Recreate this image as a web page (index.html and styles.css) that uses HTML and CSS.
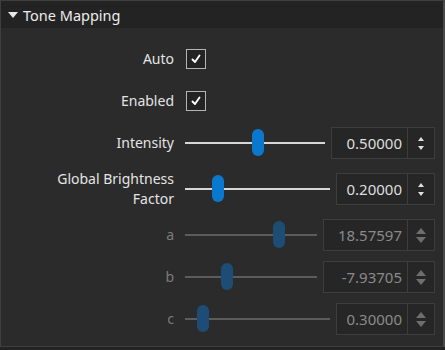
FILE: index.html
```html
<!DOCTYPE html>
<html lang="en">

<head>
  <meta charset="UTF-8">
  <title>Tone Mapping</title>
  <link rel="stylesheet" href="styles.css">
</head>

<body>
  <div class="panel">
    <!-- 标题栏 -->
    <div class="panel-head">
      <span class="caret"></span>
      <span class="panel-title">Tone Mapping</span>
    </div>

    <div class="panel-body">
      <div class="row">
        <div class="label">Auto</div>
        <div class="ctrl"><span class="check"><svg width="14" height="14" viewBox="0 0 14 14"><path d="M3.5 7.5 L6 10 L10.5 3.5" fill="none" stroke="#fff" stroke-width="1.9" stroke-linecap="round" stroke-linejoin="round"/></svg></span></div>
      </div>
      <div class="row">
        <div class="label">Enabled</div>
        <div class="ctrl"><span class="check"><svg width="14" height="14" viewBox="0 0 14 14"><path d="M3.5 7.5 L6 10 L10.5 3.5" fill="none" stroke="#fff" stroke-width="1.9" stroke-linecap="round" stroke-linejoin="round"/></svg></span></div>
      </div>
      <div class="row">
        <div class="label">Intensity</div>
        <div class="ctrl">
          <div class="slider"><div class="thumb" style="left:48.2%"></div></div>
          <div class="spin">
            <span class="spin-val">0.50000</span>
            <span class="spin-btns"><i class="up"></i><i class="down"></i></span>
          </div>
        </div>
      </div>
      <div class="row row-tall">
        <div class="label">Global Brightness<br>Factor</div>
        <div class="ctrl">
          <div class="slider"><div class="thumb" style="left:18.6%"></div></div>
          <div class="spin spin-narrow">
            <span class="spin-val">0.20000</span>
            <span class="spin-btns"><i class="up"></i><i class="down"></i></span>
          </div>
        </div>
      </div>
      <!-- 不可用的参数 -->
      <div class="row off">
        <div class="label">a</div>
        <div class="ctrl">
          <div class="slider"><div class="thumb" style="left:66.7%"></div></div>
          <div class="spin spin-wide">
            <span class="spin-val">18.57597</span>
            <span class="spin-btns"><i class="up"></i><i class="down"></i></span>
          </div>
        </div>
      </div>
      <div class="row off">
        <div class="label">b</div>
        <div class="ctrl">
          <div class="slider"><div class="thumb" style="left:27.3%"></div></div>
          <div class="spin spin-wide">
            <span class="spin-val">-7.93705</span>
            <span class="spin-btns"><i class="up"></i><i class="down"></i></span>
          </div>
        </div>
      </div>
      <div class="row off">
        <div class="label">c</div>
        <div class="ctrl">
          <div class="slider"><div class="thumb" style="left:8.3%"></div></div>
          <div class="spin spin-narrow">
            <span class="spin-val">0.30000</span>
            <span class="spin-btns"><i class="up"></i><i class="down"></i></span>
          </div>
        </div>
      </div>
    </div>
  </div>
</body>

</html>
```

FILE: styles.css
```css
* {
  margin: 0;
  padding: 0;
  box-sizing: border-box;
}

body {
  background: #232323;
  font-family: "Noto Sans", "Open Sans", sans-serif;
  color: #e2e2e2;
}

/* 面板 */
.panel {
  width: 445px;
  height: 347px;
  border: 1px solid #3e3e3e;
  border-right: 2px solid #4a4a4a;
  background: #2b2b2c;
}

.panel-head {
  height: 27px;
  background: #232323;
  display: flex;
  align-items: center;
  padding-left: 7px;
}
.caret {
  width: 0;
  height: 0;
  border-left: 5px solid transparent;
  border-right: 5px solid transparent;
  border-top: 6px solid #e8e8e8;
  margin-right: 5px;
  margin-top: 1px;
}
.panel-title {
  font-size: 14.5px;
  color: #ececec;
  line-height: 20px;
}

.panel-body {
  padding-top: 10px;
}

/* 每一行 */
.row {
  height: 42px;
  display: flex;
  align-items: center;
}
.row-tall {
  height: 46px;
  margin: 2px 0;
}
.label {
  width: 173px;
  text-align: right;
  font-size: 14px;
  line-height: 20px;
  color: #e4e4e4;
}
.ctrl {
  margin-left: 11px;
  width: 250px;
  display: flex;
  align-items: center;
  gap: 6px;
}

/* 复选框 */
.check {
  width: 20px;
  height: 20px;
  margin-left: 1px;
  border: 1px solid #b4b4b4;
  background: #232323;
  display: flex;
  align-items: center;
  justify-content: center;
}

/* 滑块 */
.slider {
  flex: 1;
  height: 2px;
  background: #d6d6d6;
  position: relative;
}
.thumb {
  position: absolute;
  top: -13px;
  width: 12px;
  height: 27px;
  border-radius: 6px;
  background: #0b78d0;
}

/* 数值框 */
.spin {
  width: 104px;
  height: 32px;
  border: 1px solid #3d3d3d;
  background: #262626;
  display: flex;
}
.spin-narrow {
  width: 99px;
}
.spin-wide {
  width: 112px;
}
.spin-val {
  flex: 1;
  text-align: right;
  padding-right: 5px;
  font-size: 15px;
  line-height: 30px;
  color: #dedede;
}
.spin-btns {
  width: 27px;
  border-left: 1px solid #3d3d3d;
  display: flex;
  flex-direction: column;
  align-items: center;
  justify-content: center;
  gap: 5px;
}
.spin-btns i {
  width: 0;
  height: 0;
  border-left: 3px solid transparent;
  border-right: 3px solid transparent;
}
.spin-btns .up {
  border-bottom: 4px solid #e0e0e0;
}
.spin-btns .down {
  border-top: 4px solid #e0e0e0;
}

/* 不可用状态 */
.off .label {
  color: #7c7c7c;
}
.off .slider {
  background: #5c5c5c;
}
.off .thumb {
  background: #1d4d74;
}
.off .spin-val {
  color: #8a8a8a;
}
.off .spin-btns {
  gap: 3px;
}
.off .spin-btns i {
  border-left-width: 5px;
  border-right-width: 5px;
}
.off .spin-btns .up {
  border-bottom: 6px solid #6e6e6e;
}
.off .spin-btns .down {
  border-top: 6px solid #6e6e6e;
}
```
